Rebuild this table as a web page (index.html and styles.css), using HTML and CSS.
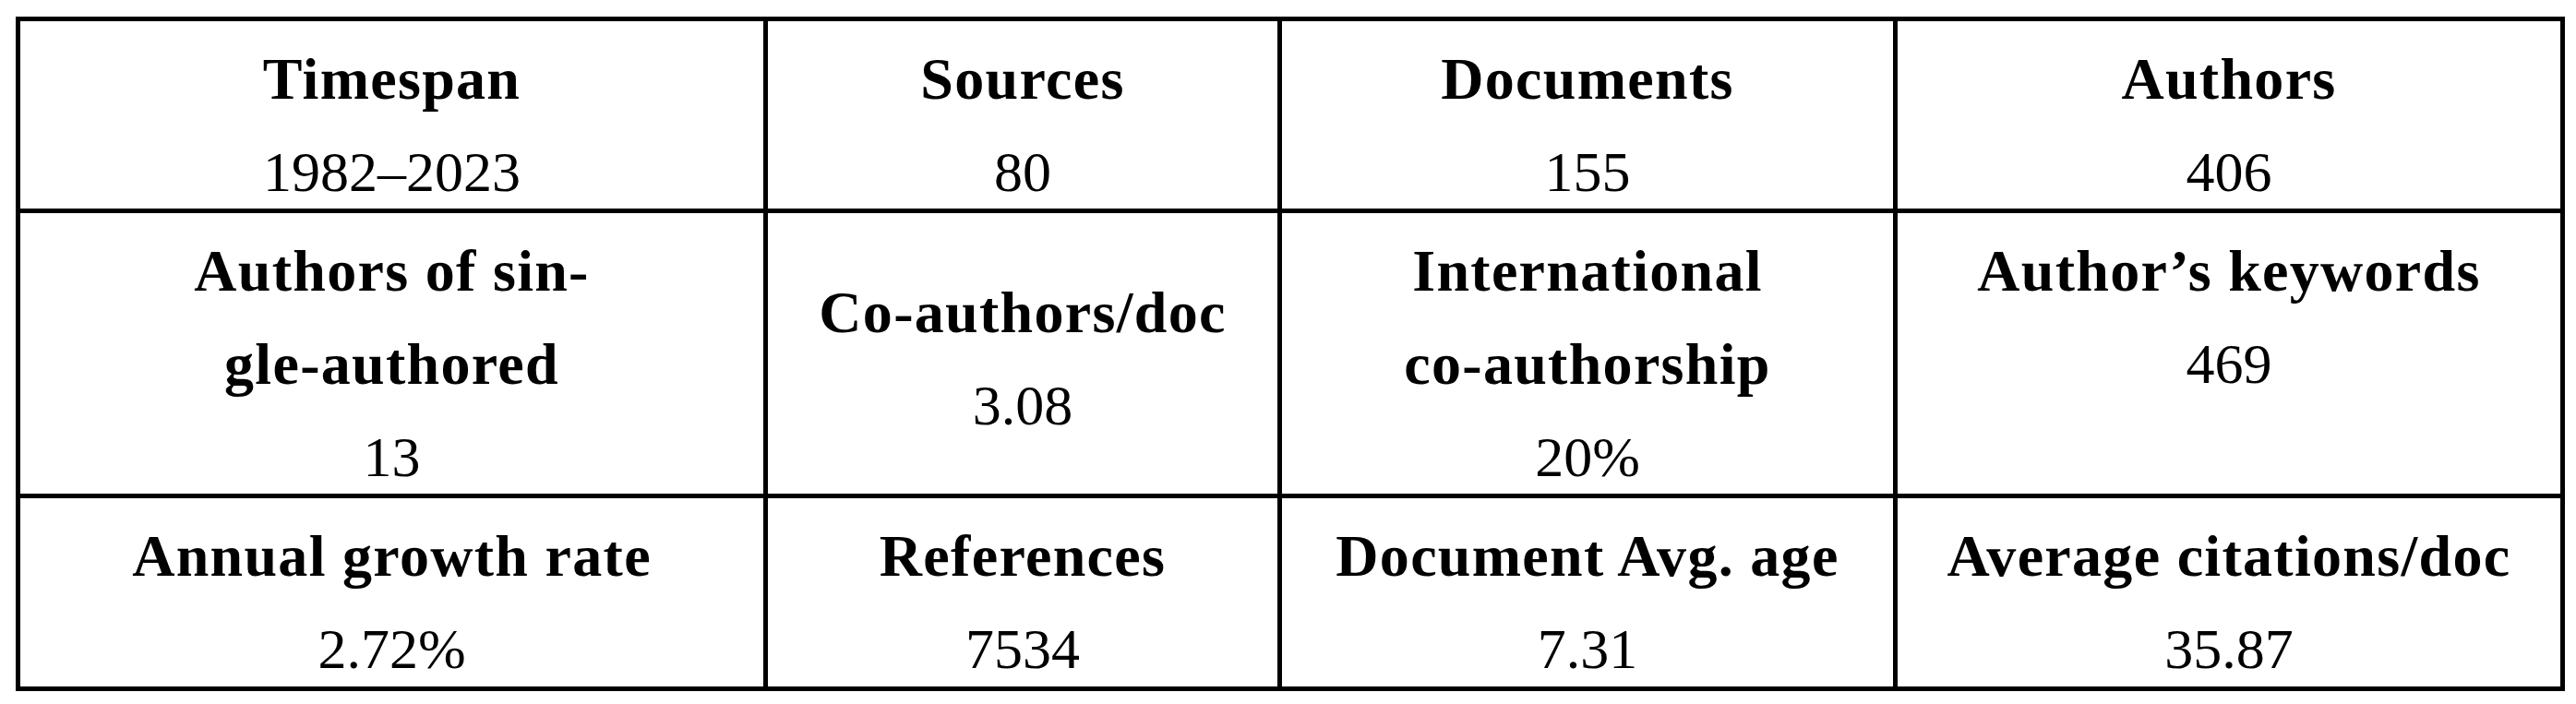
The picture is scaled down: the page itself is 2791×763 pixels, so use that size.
FILE: index.html
```html
<!DOCTYPE html>
<html lang="en">
<head>
<meta charset="utf-8">
<title>Main information</title>
<link rel="stylesheet" href="styles.css">
</head>
<body>
<div class="stats">
  <div class="cell"><div class="label">Timespan</div><div class="value">1982–2023</div></div>
  <div class="cell"><div class="label">Sources</div><div class="value">80</div></div>
  <div class="cell"><div class="label">Documents</div><div class="value">155</div></div>
  <div class="cell"><div class="label">Authors</div><div class="value">406</div></div>

  <div class="cell"><div class="label">Authors of sin-<br>gle-authored</div><div class="value">13</div></div>
  <div class="cell mid"><div class="label">Co-authors/doc</div><div class="value">3.08</div></div>
  <div class="cell"><div class="label">International<br>co-authorship</div><div class="value">20%</div></div>
  <div class="cell"><div class="label">Author’s keywords</div><div class="value">469</div></div>

  <div class="cell"><div class="label">Annual growth rate</div><div class="value">2.72%</div></div>
  <div class="cell"><div class="label">References</div><div class="value">7534</div></div>
  <div class="cell"><div class="label">Document Avg. age</div><div class="value">7.31</div></div>
  <div class="cell"><div class="label">Average citations/doc</div><div class="value">35.87</div></div>
</div>
</body>
</html>
```

FILE: styles.css
```css
html, body {
  margin: 0;
  padding: 0;
  background: #ffffff;
}

body {
  font-family: "Liberation Serif", "Times New Roman", serif;
  color: #000000;
}

.stats {
  display: grid;
  grid-template-columns: 805px 552px 662px 718px;
  grid-template-rows: 203px 304px 204px;
  gap: 5px;
  padding: 5px;
  background: #000000;
  width: max-content;
  margin: 18px 0 0 17px;
}

.cell {
  background: #ffffff;
  text-align: center;
  padding-top: 12px;
  display: flex;
  flex-direction: column;
  justify-content: flex-start;
  overflow: visible;
}

.cell.mid {
  justify-content: center;
}

.label {
  font-weight: 700;
  font-size: 64px;
  line-height: 101px;
  letter-spacing: 1.3px;
}

.value {
  font-weight: 400;
  font-size: 62px;
  line-height: 101px;
}
```
